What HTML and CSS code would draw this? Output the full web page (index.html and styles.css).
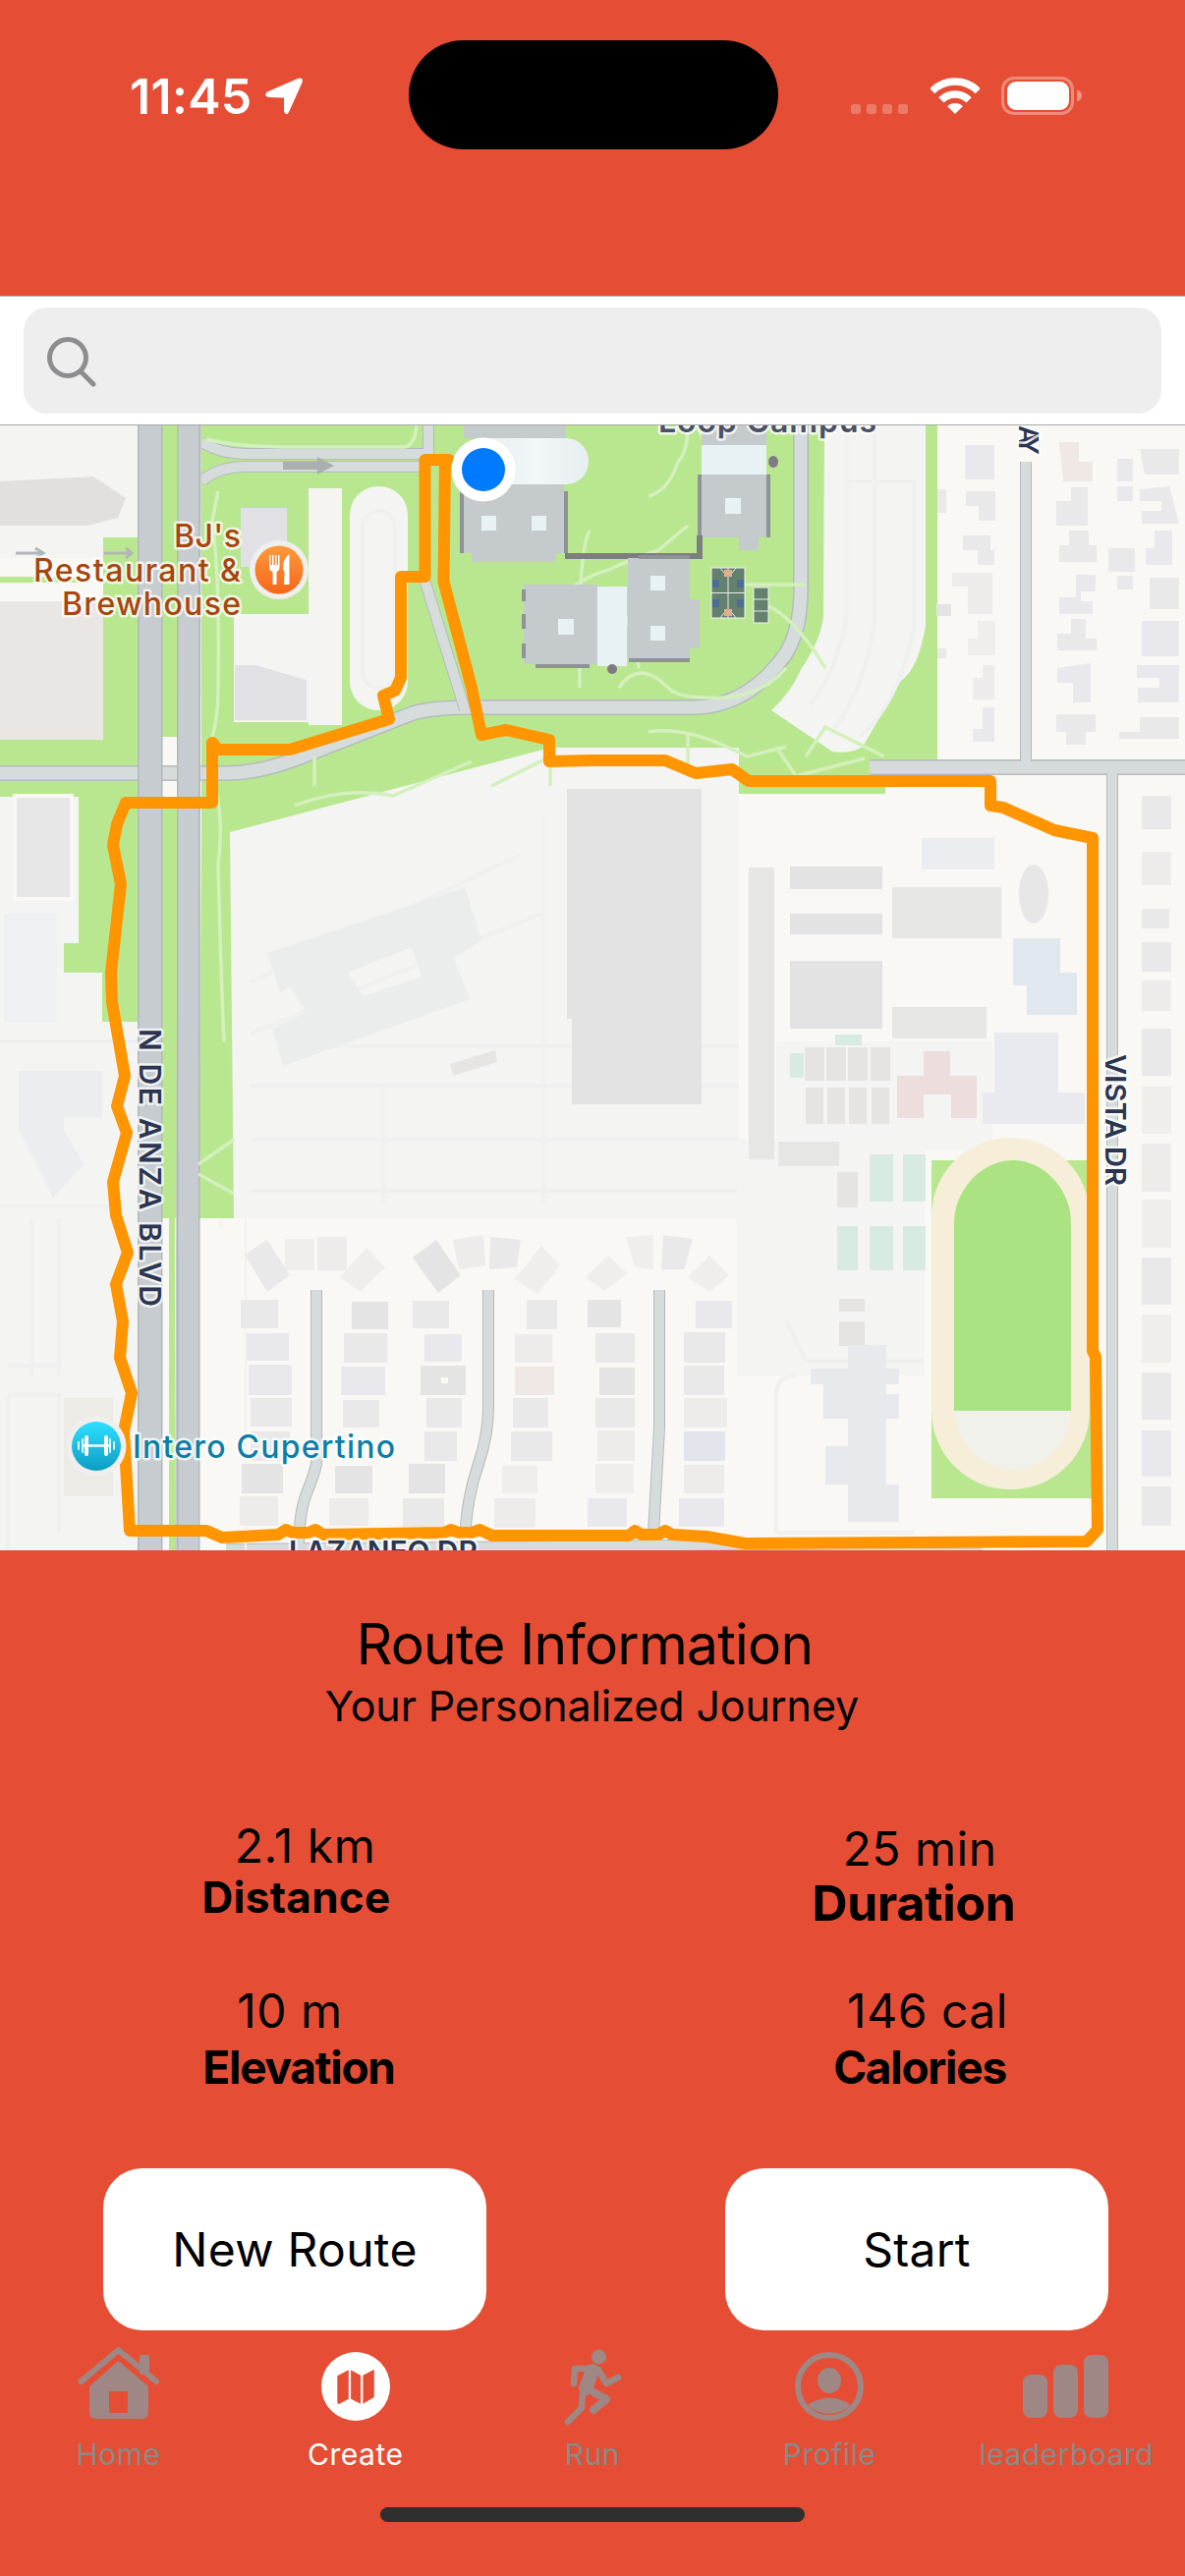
FILE: index.html
```html
<!DOCTYPE html>
<html lang="en">
<head>
<meta charset="utf-8">
<title>Route Information</title>
<link rel="stylesheet" href="styles.css">
</head>
<body>
<div class="app">
  <header class="statusbar">
    <div class="time">11:45</div>
    <svg class="loc" viewBox="0 0 40 38" width="40" height="38"><path class="white" d="M3 14.5Q-1 18 4 20L20 20.500V34Q22 40 25 35L38.500 5Q40 -1 34 1Z"/></svg>
    <div class="island"></div>
    <div class="signal"><span></span><span></span><span></span><span></span></div>
    <svg class="wifi" viewBox="0 0 50 37" width="50" height="37">
      <path class="wifi-arc" d="M1.700 13.700A33 33 0 0 1 48.300 13.700"/>
      <path class="wifi-arc" d="M10.900 22.900A20 20 0 0 1 39.100 22.900"/>
      <path class="white" d="M25 37L17.200 29.200A11 11 0 0 1 32.800 29.200Z"/>
    </svg>
    <div class="battery"><div class="battery-fill"></div></div>
    <div class="battery-cap"></div>
  </header>

  <section class="search">
    <div class="search-field">
      <svg class="search-icon" viewBox="0 0 52 52" width="52" height="52"><circle cx="22" cy="22" r="18.500"/><path d="M35 36L48 49"/></svg>
    </div>
  </section>

  <svg class="map" viewBox="0 433 1206 1145" width="1206" height="1145">
    <defs>
      <linearGradient id="gOrange" x1="0" y1="0" x2="0" y2="1"><stop offset="0" stop-color="#FF9A3C"/><stop offset="1" stop-color="#F5661A"/></linearGradient>
      <linearGradient id="gBlue" x1="0" y1="0" x2="0" y2="1"><stop offset="0" stop-color="#2EE0FF"/><stop offset="1" stop-color="#0E9CC2"/></linearGradient>
      <linearGradient id="gGlass" x1="0" y1="0" x2="1" y2="0"><stop offset="0" stop-color="#E4EDEF"/><stop offset=".6" stop-color="#F2F7F9"/><stop offset="1" stop-color="#E6EEF0"/></linearGradient>
    </defs>
    <rect class="base" x="0" y="433" width="1206" height="1145"/>
    <!-- lots -->
    <rect class="lot" x="0" y="433" width="140" height="135"/>
    <rect class="lot" x="0" y="795" width="140" height="783"/>
    <rect class="lot" x="0" y="1100" width="120" height="478"/>

    <!-- green -->
    <path class="green" d="M205 433H954V775H901V808H751L700 762H560L238 855V1240H202L205 855Z"/>
    <path class="green" d="M105 547H140V782H0V753H105Z"/>
    <path class="green" d="M0 587H80V593H0Z"/>
    <path class="green" d="M80 793H140V1040H104V990H65V960H80Z"/>
    <rect class="green" x="0" y="793" width="80" height="18"/>
    <rect class="green" x="165" y="433" width="17" height="807"/>
    <rect class="base" x="165" y="750" width="15" height="32"/>
    <rect class="base" x="165" y="794" width="15" height="26"/>
    <rect class="base" x="165" y="1240" width="14" height="338"/>
    <rect class="green" x="172" y="1240" width="6" height="338"/>

    <!-- large pale lots -->
    <path class="lot" d="M234 847L560 761H752V1240H238Z"/>
    <path class="lot" d="M839 433H942V637Q935 680 917 693L878 760Q865 768 847 765L785 723Q805 705 816 680Q836 650 838 627Z"/>
    <path class="lot-line" d="M862 433V620Q858 670 825 718M890 433V630Q885 690 846 748M862 490H930V640Q915 715 875 750"/>
    <rect class="white-lot" x="314" y="497" width="34" height="241"/>
    <rect class="lot" x="356" y="495" width="59" height="228" rx="29"/>
    <rect class="lot-line" x="369" y="520" width="33" height="180" rx="16"/>
    <rect class="lot" x="238" y="625" width="88" height="110"/>
    <path class="lot-line" d="M255 1000L530 870M255 1052L550 930M254 1105H752M254 1160H752M254 1212H752M390 1105V1225M553 830V1225M320 1065H752M0 1060H140M0 1228H120M32 1240V1400M60 1240V1400M8 1390H60M8 1420H60V1560M8 1420V1578"/>

    <!-- campus lots right -->
    <rect class="lot" x="750" y="1160" width="190" height="240"/>
    <rect class="lot" x="790" y="1060" width="220" height="110"/>
    <path class="lot-line" d="M810 1400Q790 1400 790 1420V1560H930M800 1345L820 1385H940"/>

    <!-- buildings left -->
    <path class="b-warm" d="M0 490L95 485L128 507L120 527L90 535H0Z"/>
    <rect class="b-warm2" x="0" y="612" width="105" height="141"/>
    <rect class="b-mauve" x="245" y="517" width="47" height="60"/>
    <path class="b-mauve" d="M239 677H260L312 692V733H239Z"/>
    <rect class="b-grey" x="15" y="810" width="58" height="105"/>
    <rect class="b-pale" x="4" y="930" width="54" height="111"/>
    <path class="b-blue" d="M19 1090H104V1138H65V1150L85 1185L54 1219L19 1150Z"/>
    <rect class="b-warm3" x="65" y="1423" width="50" height="100"/>

    <!-- central -->
    <path class="b-pale2" d="M272 970L473 903L490 957L462 975L478 1017L288 1085L277 1047L311 1031L296 1004L285 1010ZM354 990L369 1014L429 994L419 964Z" fill-rule="evenodd"/>
    <path class="b-dark" d="M582 803H714V1124H582V1037H577V803Z"/>
    <path class="b-warm4" d="M458 1083L504 1069L506 1081L461 1095Z"/>

    <!-- campus blocks -->
    <rect class="b-blue" x="938" y="853" width="74" height="32"/>
    <rect class="b-dark" x="804" y="882" width="94" height="23"/>
    <rect class="b-warm5" x="908" y="903" width="111" height="52"/>
    <rect class="b-dark" x="804" y="930" width="94" height="21"/>
    <rect class="b-dark" x="804" y="978" width="94" height="69"/>
    <rect class="b-warm5" x="908" y="1025" width="96" height="32"/>
    <rect class="b-warm5" x="762" y="883" width="26" height="297"/>
    <rect class="b-warm5" x="792" y="1162" width="62" height="25"/>
    <ellipse class="b-grey" cx="1052" cy="910" rx="17" ry="32"/>
    <rect class="b-sky" x="1031" y="955" width="48" height="46"/>
    <path class="b-sky" d="M1031 990H1096V1033H1045V1003H1031Z"/>
    <rect class="b-blue2" x="1012" y="1051" width="65" height="62"/>
    <rect class="b-blue2" x="1000" y="1112" width="104" height="32"/>
    <rect class="b-tan" x="819" y="1066" width="20" height="34"/><rect class="b-tan" x="841" y="1066" width="20" height="34"/><rect class="b-tan" x="863" y="1066" width="20" height="34"/><rect class="b-tan" x="886" y="1066" width="20" height="34"/>
    <rect class="b-tan" x="820" y="1107" width="18" height="37"/><rect class="b-tan" x="842" y="1107" width="18" height="37"/><rect class="b-tan" x="864" y="1107" width="18" height="37"/><rect class="b-tan" x="887" y="1107" width="18" height="37"/>
    <path class="b-pink" d="M940 1070H967V1095H994V1138H968V1114H940V1138H913V1095H940Z"/>
    <rect class="court" x="885" y="1175" width="24" height="48"/><rect class="court" x="919" y="1175" width="23" height="48"/>
    <rect class="court" x="852" y="1248" width="21" height="45"/><rect class="court" x="885" y="1248" width="24" height="45"/><rect class="court" x="919" y="1248" width="23" height="45"/>
    <rect class="court" x="850" y="1053" width="27" height="11"/><rect class="court" x="804" y="1072" width="14" height="25"/>
    <rect class="b-tan" x="852" y="1193" width="21" height="36"/>
    <rect class="b-tan" x="854" y="1322" width="26" height="13"/><rect class="b-tan" x="854" y="1345" width="26" height="25"/>
    <path class="b-blue3" d="M863 1369H902V1393H915V1409H902V1419H915V1444H902V1511H915V1549H863V1511H840V1472H863V1444H838V1409H825V1393H863Z"/>

    <!-- track -->
    <rect class="green" x="948" y="1181" width="167" height="344"/>
    <rect class="track" x="948" y="1158" width="161" height="358" rx="80"/>
    <path class="field" d="M971 1436V1245C971 1210 1000 1181 1031 1181C1062 1181 1090 1210 1090 1245V1436Z"/>
    <path class="field-pale" d="M971 1436H1090C1088 1470 1060 1496 1031 1496C1002 1496 973 1470 971 1436Z"/>

    <!-- campus loop roads -->
    <g class="roads">
      <path class="road-edge" d="M0 787H230Q262 787 300 773L420 726Q440 720 480 720H700Q760 722 800 665Q815 640 815 600V433"/>
      <path class="road" d="M0 787H230Q262 787 300 773L420 726Q440 720 480 720H700Q760 722 800 665Q815 640 815 600V433"/>
      <path class="road-edge thin" d="M205 450Q225 462 250 462H436M205 490Q222 475 250 475H436M436 433V475M432 590L473 722"/>
      <path class="road thin" d="M205 450Q225 462 250 462H436M205 490Q222 475 250 475H436M436 433V475M432 590L473 722"/>
      <path class="road-edge" d="M885 781H1206"/>
      <path class="road" d="M885 781H1206"/>
      <path class="road-edge thin" d="M1044 470V775M1132 787V1578"/>
      <path class="road thin" d="M1044 470V775M1132 787V1578"/>
      <path class="road-edge thin" d="M322 1313V1490Q320 1500 312 1520Q304 1540 304 1578M497 1313V1433Q497 1460 487 1490Q473 1530 473 1578M671 1313V1454L664 1578M230 1577L790 1572L1000 1575"/>
      <path class="road thin" d="M322 1313V1490Q320 1500 312 1520Q304 1540 304 1578M497 1313V1433Q497 1460 487 1490Q473 1530 473 1578M671 1313V1454L664 1578M230 1577L790 1572L1000 1575"/>
    </g>
    <path class="arrow-grey" d="M288 470H323V465L340 474L323 483V478H288Z"/>
    <path class="arrow-thin" d="M16 563H42M36 558L44 563L36 568M106 563H134M128 558L134 563L128 568"/>

    <!-- De Anza -->
    <path class="main-road" d="M140 433H165V1578H141Z"/>
    <path class="main-road" d="M182 433H205L202 1578H178Z"/>
    <rect class="edge-line" x="140" y="433" width="1.500" height="1145"/><rect class="edge-line" x="164" y="433" width="1.500" height="1145"/>
    <rect class="edge-line" x="180" y="433" width="1.500" height="1145"/><rect class="edge-line" x="202" y="433" width="1.500" height="1145"/>

    <!-- footpaths -->
    <path class="path" d="M210 447Q240 455 300 455H410Q422 455 424 433M222 500L216 530Q224 590 222 700Q222 740 212 760M218 800Q228 830 222 880Q225 1000 228 1060M238 1160L202 1185M238 1215L202 1195M600 540Q590 560 590 640V700M560 625Q580 590 620 580Q640 570 670 560L700 535M600 600Q640 600 650 680M630 700Q650 670 680 700Q690 712 740 710Q780 705 800 680M660 505Q680 500 690 470Q700 460 700 433M710 433Q720 470 760 470M755 595H820M770 615Q800 615 840 680M660 745Q700 738 760 770L800 760M700 745V790M790 760L810 790L880 772M820 770L840 740L900 770M320 770V800M500 800L560 770V800M300 820Q350 800 400 810L480 775"/>
    <path class="path-thin" d="M250 1240V1578M225 1240V1250"/>

    <!-- campus buildings -->
    <rect class="glass" x="470" y="446" width="129" height="47" rx="23"/>
    <rect class="bld" x="472" y="433" width="104" height="13"/>
    <path class="bld" d="M472 493H574V563H566V572H480V563H472Z"/>
    <path class="bld-edge" d="M470 500V563M576 500V563"/>
    <rect class="sky" x="490" y="525" width="15" height="15"/><rect class="sky" x="541" y="525" width="15" height="15"/>

    <rect class="bld" x="714" y="433" width="66" height="20"/>
    <rect class="sky" x="714" y="453" width="66" height="30"/>
    <path class="bld" d="M714 483H780V547H772V560H752V547H714Z"/>
    <path class="bld-edge" d="M712 483V547M782 483V547"/>
    <rect class="sky" x="738" y="507" width="16" height="16"/>
    <ellipse class="dot" cx="787" cy="470" rx="5" ry="6"/>
    <path class="wall" d="M575 566H712V545"/>

    <rect class="bld" x="533" y="595" width="75" height="81"/>
    <rect class="sky" x="608" y="597" width="30" height="81"/>
    <path class="bld" d="M639 568H702V610H712V660H702V670H639Z"/>
    <rect class="sky" x="568" y="630" width="16" height="16"/>
    <rect class="sky" x="662" y="586" width="15" height="15"/><rect class="sky" x="662" y="637" width="15" height="15"/>
    <path class="bld-edge" d="M533 600V612M533 625V640M533 655V670M640 672H702M545 678H600M650 567H702"/>
    <ellipse class="dot" cx="623" cy="681" rx="5" ry="5"/>

    <rect class="court-dark" x="724" y="578" width="34" height="51"/>
    <path class="court-lines" d="M724 603.500H758M741 578V629M733 578Q741 592 749 578M733 629Q741 615 749 629"/>
    <rect class="court-tan" x="737" y="580" width="8" height="7"/><rect class="court-tan" x="737" y="620" width="8" height="7"/>
    <rect class="court-b" x="725" y="590" width="7" height="8"/><rect class="court-b" x="750" y="590" width="7" height="8"/><rect class="court-b" x="725" y="610" width="7" height="8"/><rect class="court-b" x="750" y="610" width="7" height="8"/>
    <rect class="court-dark" x="767" y="598" width="15" height="36"/>
    <path class="court-lines" d="M767 610H782M767 622H782"/>

    <!-- residential right -->
    <g class="houses">
      <path class="hb" d="M982 453H1012V488H982Z"/><path class="hg" d="M983 500H1013V530H996V515H983Z"/><path class="hg" d="M980 545H1008V560H1012V575H995V560H980Z"/><path class="hp" d="M969 583H1010V625H985V597H969Z"/><path class="hw" d="M995 632H1013V667H985V650H995Z"/><path class="hp" d="M1000 677H1012V712H990V690H1000Z"/><path class="hb" d="M1000 720H1012V755H990V742H1000Z"/>
      <path class="hr" d="M1078 450H1098V470H1112V490H1082Z"/><path class="hg" d="M1090 496H1107V535H1075V510H1090Z"/><path class="hg" d="M1088 540H1108V555H1116V572H1078V555H1088Z"/><path class="hb" d="M1095 585H1115V602H1100V612H1112V625H1078V608H1095Z"/><path class="hg" d="M1090 630H1105V650H1116V662H1076V645H1090Z"/><path class="hb" d="M1076 680L1110 675V715H1092V695H1076Z"/><path class="hg" d="M1075 727H1115V745H1105V758H1085V745H1075Z"/>
      <path class="hg" d="M1160 457H1200V483H1165Z"/><path class="hg" d="M1160 498L1190 495L1200 533H1162V520H1182V510H1160Z"/><path class="hb" d="M1175 540H1193V575H1166V558H1175Z"/><rect class="hg" x="1170" y="588" width="30" height="32"/><rect class="hb" x="1162" y="632" width="38" height="36"/><path class="hb" d="M1157 677H1200V715H1158V700H1180V690H1157Z"/><path class="hg" d="M1139 745H1160V730H1200V752H1139Z"/>
      <rect class="hb" x="1137" y="467" width="16" height="23"/><rect class="hb" x="1137" y="495" width="16" height="15"/><rect class="hg" x="1128" y="558" width="27" height="24"/><rect class="hg" x="1137" y="586" width="16" height="14"/>
      <rect class="hg" x="954" y="498" width="9" height="24"/><rect class="hd" x="953" y="615" width="15" height="12"/><rect class="hg" x="954" y="660" width="9" height="10"/>
      <rect class="hg" x="1162" y="810" width="30" height="34"/><rect class="hp" x="1162" y="867" width="30" height="34"/><rect class="hg" x="1162" y="925" width="28" height="20"/><rect class="hg" x="1162" y="959" width="30" height="30"/>
      <rect class="hp" x="1162" y="998" width="30" height="31"/><rect class="hg" x="1162" y="1047" width="30" height="48"/><rect class="hw" x="1162" y="1106" width="30" height="48"/><rect class="hp" x="1162" y="1164" width="30" height="49"/><rect class="hw" x="1162" y="1221" width="30" height="49"/><rect class="hg" x="1162" y="1280" width="30" height="48"/><rect class="hw" x="1162" y="1338" width="30" height="49"/><rect class="hg" x="1162" y="1397" width="30" height="48"/><rect class="hb" x="1162" y="1456" width="30" height="47"/><rect class="hg" x="1162" y="1513" width="30" height="40"/>
      <!-- cul-de-sac fans -->
      <path class="hg" d="M249 1277L272 1262L295 1298L272 1315Z"/><rect class="hw" x="290" y="1261" width="30" height="32"/><rect class="hp" x="323" y="1259" width="30" height="34"/><path class="hw" d="M346 1300L373 1270L392 1290L367 1315Z"/>
      <path class="hd" d="M420 1280L444 1262L469 1298L446 1316Z"/><path class="hp" d="M461 1262L492 1257L494 1288L467 1292Z"/><path class="hg" d="M499 1259L530 1262L526 1290L498 1292Z"/><path class="hw" d="M524 1302L551 1268L570 1288L547 1317Z"/>
      <path class="hw" d="M596 1300L619 1278L638 1296L615 1314Z"/><path class="hw" d="M637 1259L665 1257V1292L646 1290Z"/><path class="hg" d="M675 1257L705 1261L696 1292H673Z"/><path class="hw" d="M700 1300L722 1278L742 1298L722 1315Z"/>
      <!-- street 1 -->
      <rect class="hg" x="245" y="1323" width="38" height="29"/><rect class="hb" x="251" y="1357" width="43" height="28"/><rect class="hb" x="253" y="1389" width="44" height="31"/><rect class="hg" x="255" y="1423" width="42" height="29"/><rect class="hg" x="255" y="1457" width="40" height="30"/><rect class="hd" x="246" y="1490" width="42" height="30"/><rect class="hp" x="244" y="1523" width="39" height="30"/>
      <rect class="hd" x="358" y="1325" width="37" height="28"/><rect class="hg" x="350" y="1357" width="44" height="30"/><rect class="hb" x="347" y="1391" width="45" height="29"/><rect class="hg" x="349" y="1425" width="37" height="28"/><rect class="hd" x="341" y="1492" width="38" height="28"/><rect class="hp" x="335" y="1525" width="40" height="28"/>
      <!-- street 2 -->
      <rect class="hg" x="420" y="1324" width="37" height="28"/><rect class="hb" x="432" y="1358" width="38" height="28"/><rect class="hd" x="428" y="1390" width="46" height="30"/><rect class="base" x="449" y="1402" width="7" height="6"/><rect class="hg" x="434" y="1423" width="36" height="30"/><rect class="hg" x="432" y="1457" width="33" height="30"/><rect class="hd" x="416" y="1490" width="37" height="30"/><rect class="hg" x="410" y="1525" width="42" height="29"/>
      <rect class="hg" x="536" y="1323" width="31" height="30"/><rect class="hp" x="524" y="1358" width="38" height="29"/><rect class="hr" x="524" y="1391" width="40" height="29"/><rect class="hg" x="522" y="1423" width="36" height="30"/><rect class="hg" x="520" y="1457" width="42" height="30"/><rect class="hw" x="511" y="1492" width="36" height="28"/><rect class="hp" x="503" y="1525" width="42" height="30"/>
      <!-- street 3 -->
      <rect class="hd" x="598" y="1323" width="34" height="28"/><rect class="hg" x="606" y="1357" width="40" height="30"/><rect class="hd" x="610" y="1392" width="36" height="28"/><rect class="hg" x="606" y="1423" width="40" height="30"/><rect class="hp" x="608" y="1456" width="38" height="31"/><rect class="hw" x="606" y="1490" width="39" height="30"/><rect class="hb" x="598" y="1525" width="40" height="29"/>
      <rect class="hb" x="708" y="1324" width="37" height="28"/><rect class="hg" x="696" y="1356" width="42" height="31"/><rect class="hg" x="696" y="1390" width="41" height="30"/><rect class="hp" x="696" y="1423" width="44" height="30"/><rect class="hsky" x="696" y="1457" width="42" height="30"/><rect class="hp" x="696" y="1491" width="41" height="29"/><rect class="hb" x="691" y="1525" width="46" height="29"/>
    </g>

    <!-- route -->
    <path class="route" d="M457 468H432.500V587H408V690L402 703L390 708L396 732L295 763H222L216 756V817H128L119 839L115 860L123 900L113 990L114 1020L127 1095L119 1126L129 1153L115 1203L118 1237L130 1275L118 1307L125 1345L122 1382L134 1418L126 1457L132 1558H210L226 1565L283 1562L291 1557L298 1560H314L321 1557L329 1562L452 1560L459 1557L467 1560H480L488 1557L501 1563H640L646 1558L653 1562L670 1562L677 1558L684 1562L719 1564L758 1571L1106 1569L1117 1557L1115 1381L1112 1375V853L1073 845L1021 822L1008 820V795H762L745 783L708 787L677 774H600L559 775V753L515 743L490 748L480 700L451.500 592L453 468"/>

    <!-- user dot -->
    <circle class="white" cx="492" cy="478" r="32.500"/>
    <circle class="blue" cx="492" cy="478" r="22"/>

    <!-- labels -->
    <text class="lbl lbl-top" x="670" y="440" textLength="222">Loop Campus</text>
    <text class="lbl lbl-ay" transform="translate(1037 463) rotate(90)" x="-30" y="0" textLength="30">AY</text>
    <text class="lbl lbl-street" transform="translate(142 1047) rotate(90)" x="0" y="0" textLength="283">N DE ANZA BLVD</text>
    <text class="lbl lbl-street2" transform="translate(1125 1073) rotate(90)" x="0" y="0" textLength="134">VISTA DR</text>
    <text class="lbl lbl-street" x="294" y="1590" textLength="192">LAZANEO DR</text>

    <text class="lbl lbl-poi lbl-orange" x="177" y="557" textLength="68">BJ's</text>
    <text class="lbl lbl-poi lbl-orange" x="34" y="592" textLength="211">Restaurant &amp;</text>
    <text class="lbl lbl-poi lbl-orange" x="63" y="626" textLength="182">Brewhouse</text>
    <circle class="pin-halo" cx="284" cy="580" r="30"/>
    <circle cx="284" cy="580" r="24.500" fill="url(#gOrange)"/>
    <path class="white" d="M274 565H275.500V575H277V565H278.500V575H280V565H281.500V575H283V565H284.500V577Q284.500 581 281.500 582V595H277.500V582Q274 581 274 577Z"/>
    <path class="white" d="M289 595H294.500V564Q288 568 288 579L289.500 582Z"/>

    <circle class="pin-halo" cx="98" cy="1472" r="30.500"/>
    <circle cx="98" cy="1472" r="25" fill="url(#gBlue)"/>
    <path class="dumb" d="M85 1471.500H111"/>
    <path class="dumb-thick" d="M88 1463V1480M108 1463V1480"/>
    <path class="dumb-thin" d="M80 1468V1475M116 1468V1475M84 1465V1478M112 1465V1478"/>
    <text class="lbl lbl-poi lbl-blue" x="135" y="1484" textLength="267">Intero Cupertino</text>
  </svg>

  <main class="info">
    <h1 class="title">Route Information</h1>
    <p class="subtitle">Your Personalized Journey</p>
    <div class="stats">
      <div class="stat stat-left">
        <div class="value v-distance">2.1 km</div>
        <div class="label l-distance">Distance</div>
      </div>
      <div class="stat stat-right">
        <div class="value v-duration">25 min</div>
        <div class="label l-duration">Duration</div>
      </div>
      <div class="stat stat-left">
        <div class="value v-elevation">10 m</div>
        <div class="label l-elevation">Elevation</div>
      </div>
      <div class="stat stat-right">
        <div class="value v-calories">146 cal</div>
        <div class="label l-calories">Calories</div>
      </div>
    </div>
    <div class="actions">
      <button class="btn">New Route</button>
      <button class="btn">Start</button>
    </div>
  </main>

  <nav class="tabs">
    <div class="tab">
      <svg class="tab-icon" viewBox="0 0 84 80" width="84" height="80">
        <path class="icon-stroke" d="M3.500 35L41.500 3L80 35"/>
        <rect class="icon-fill" x="63" y="8" width="10" height="20" rx="2"/>
        <path class="icon-fill" fill-rule="evenodd" d="M41.500 14L72 40V67A6 6 0 0 1 66 73H18A6 6 0 0 1 12 67V40ZM32 45V67H51V45Z"/>
      </svg>
      <span class="tab-label">Home</span>
    </div>
    <div class="tab tab-active">
      <svg class="tab-icon" viewBox="0 0 70 80" width="70" height="80">
        <circle class="white" cx="35" cy="40" r="35"/>
        <path class="map-panel" d="M16.300 29.300L27.800 23.300V52.700L18 58Q16.300 58 16.300 56ZM30.100 23.300L40 28.700V57.700L30.100 52.700ZM42.400 28.700L53.800 22.700V51L42.400 57.700Z"/>
      </svg>
      <span class="tab-label">Create</span>
    </div>
    <div class="tab">
      <svg class="tab-icon" viewBox="0 0 62 80" width="62" height="80">
        <ellipse class="icon-fill" cx="37.500" cy="10" rx="7.500" ry="7.500"/>
        <path class="icon-limb" d="M29 22H13L12 37"/>
        <path class="icon-torso" d="M31 24L24 42"/>
        <path class="icon-limb" d="M37 23L45 37L57 31"/>
        <path class="icon-leg" d="M25 42L45 53L32 64"/>
        <path class="icon-limb" d="M21 47L20 62L6 76"/>
      </svg>
      <span class="tab-label">Run</span>
    </div>
    <div class="tab">
      <svg class="tab-icon" viewBox="0 0 70 80" width="70" height="80">
        <circle class="icon-ring" cx="35" cy="40" r="32"/>
        <ellipse class="icon-fill" cx="35" cy="34" rx="12" ry="13"/>
        <path class="icon-fill" d="M13 59Q35 44 57 59A32 32 0 0 1 13 59Z"/>
      </svg>
      <span class="tab-label">Profile</span>
    </div>
    <div class="tab">
      <svg class="tab-icon" viewBox="0 0 88 80" width="88" height="80">
        <rect class="icon-fill" x="0" y="28" width="25" height="44" rx="8"/>
        <rect class="icon-fill" x="31" y="18" width="25" height="54" rx="8"/>
        <rect class="icon-fill" x="62" y="8" width="25" height="64" rx="8"/>
      </svg>
      <span class="tab-label">leaderboard</span>
    </div>
  </nav>
  <div class="home-indicator"></div>
</div>
</body>
</html>
```
FILE: styles.css
```css
* { box-sizing: border-box; }
html, body { margin: 0; padding: 0; }
body { width: 1206px; height: 2622px; overflow: hidden; font-family: "Inter", "Liberation Sans", sans-serif; }
.app { width: 1206px; height: 2622px; background: #E54E35; display: flex; flex-direction: column; }

/* status bar */
.statusbar { height: 301px; display: flex; align-items: flex-start; padding-left: 132px; flex: none; }
.time { color: #fff; font-size: 50px; font-weight: 600; line-height: 50px; margin-top: 73px; width: 137px; letter-spacing: 0.3px; }
.loc { margin-top: 79px; flex: none; }
.island { width: 376px; height: 111px; background: #000; border-radius: 56px; margin: 41px 74px 0 107px; flex: none; }
.signal { display: flex; gap: 6px; margin-top: 106px; width: 81px; flex: none; }
.signal span { width: 10px; height: 10px; border-radius: 3px; background: rgba(255,255,255,.25); }
.wifi { margin-top: 79px; flex: none; }
.wifi-arc { fill: none; stroke: #fff; stroke-width: 7.5; }
.battery { width: 74px; height: 39px; margin: 78px 0 0 22px; border: 3px solid rgba(255,255,255,.35); border-radius: 13px; padding: 2px 2.5px; flex: none; }
.battery-fill { width: 100%; height: 100%; background: #fff; border-radius: 9px; }
.battery-cap { width: 5px; height: 11px; margin: 92px 0 0 3px; background: rgba(255,255,255,.4); border-radius: 0 5px 5px 0; flex: none; }
.white { fill: #fff; }
.blue { fill: #007AFF; }

/* search */
.search { height: 132px; flex: none; background: #fff; border-top: 1px solid #B5B5B5; border-bottom: 1px solid #A9A9A9; padding: 11px 24px; }
.search-field { height: 108px; background: #EEEEEE; border-radius: 24px; padding: 29px 0 0 23px; }
.search-icon { display: block; fill: none; stroke: #8D8D90; stroke-width: 5; stroke-linecap: round; }

/* map */
.map { display: block; flex: none; }
.base { fill: #F9F8F4; }
.lot { fill: #F4F4F3; }
.white-lot { fill: #F5F4F1; }
.lot-line { fill: none; stroke: #EFF0EF; stroke-width: 4; }
.green { fill: #B9E78F; }
.road { fill: none; stroke: #D6DCDB; stroke-width: 13; }
.road.thin { stroke-width: 10; }
.road-edge { fill: none; stroke: #B5BBBD; stroke-width: 16; }
.road-edge.thin { stroke-width: 12; }
.main-road { fill: #C6CCCF; }
.edge-line { fill: #B2B8BA; }
.arrow-grey { fill: #ABAFB0; }
.arrow-thin { fill: none; stroke: #B3B6B5; stroke-width: 3; }
.path { fill: none; stroke: #D3F0BD; stroke-width: 3.5; }
.path-thin { fill: none; stroke: #F2F2EF; stroke-width: 2; }
.bld { fill: #C5CBCD; }
.bld-edge { fill: none; stroke: #8F9395; stroke-width: 4; }
.sky { fill: #E8F2F4; }
.glass { fill: url(#gGlass); }
.wall { fill: none; stroke: #7C7E7F; stroke-width: 6; }
.dot { fill: #7D7A83; }
.court-dark { fill: #64806F; stroke: #F1F4EF; stroke-width: 1; }
.court-lines { fill: none; stroke: #E8EEE6; stroke-width: 1; }
.court-tan { fill: #E0AE8B; }
.court-b { fill: #4B6E93; }
.b-warm { fill: #E2E0DF; }
.b-warm2 { fill: #E9E6E3; }
.b-warm3 { fill: #EDEBE6; }
.b-warm4 { fill: #E6E5E2; }
.b-warm5 { fill: #E6E6E3; }
.b-mauve { fill: #E1E0E4; }
.b-grey { fill: #E7E7E7; stroke: #F9F8F4; stroke-width: 4; }
.b-pale { fill: #EFF0F2; }
.b-pale2 { fill: #EBECEC; }
.b-dark { fill: #E3E3E3; }
.b-blue { fill: #ECEDF1; }
.b-blue2 { fill: #E9EAF0; }
.b-blue3 { fill: #E7E9ED; }
.b-sky { fill: #E1E7EE; }
.b-tan { fill: #E5E4E1; }
.b-pink { fill: #EDDDDD; }
.court { fill: #D8EBE1; }
.track { fill: #F6EED9; }
.field { fill: #ABE383; }
.field-pale { fill: #F0F1EA; }
.hg { fill: #E9E9E9; }
.hb { fill: #E9E9ED; }
.hw { fill: #F0EEEA; }
.hd { fill: #E5E4E4; }
.hp { fill: #EEECEB; }
.hr { fill: #EFE8E5; }
.hsky { fill: #E2E5EC; }
.route { fill: none; stroke: #FF9500; stroke-width: 12; stroke-linejoin: round; stroke-linecap: round; }
.pin-halo { fill: #EFEFED; }
.dumb { fill: none; stroke: #fff; stroke-width: 2.5; }
.dumb-thick { fill: none; stroke: #fff; stroke-width: 4; stroke-linecap: round; }
.dumb-thin { fill: none; stroke: rgba(255,255,255,.85); stroke-width: 2; stroke-linecap: round; }
.lbl { font-family: "Inter", "Liberation Sans", sans-serif; paint-order: stroke; stroke: rgba(255,255,255,.75); stroke-width: 5px; stroke-linejoin: round; }
.lbl-top { font-size: 32px; font-weight: 600; fill: #4B5066; }
.lbl-ay { font-size: 27px; font-weight: 600; fill: #2B3550; }
.lbl-street { font-size: 30px; font-weight: 600; fill: #2B3550; }
.lbl-street2 { font-size: 29px; font-weight: 600; fill: #2B3550; }
.lbl-poi { font-size: 32px; font-weight: 500; }
.lbl-orange { fill: #A8460F; }
.lbl-blue { fill: #0B7FA6; }

/* info */
.info { height: 862px; flex: none; display: flex; flex-direction: column; color: #000; }
.title { margin: 61px 16px 0 0; font-size: 57px; line-height: 70px; font-weight: 400; text-align: center; letter-spacing: -0.8px; }
.subtitle { margin: 1px 0 0; padding-right: 1px; font-size: 43px; line-height: 52px; font-weight: 400; text-align: center; letter-spacing: -0.1px; }
.stats { display: grid; grid-template-columns: 603px 603px; margin-top: 91px; }
.stat { display: flex; flex-direction: column; text-align: center; height: 170px; }
.stat-right { padding-left: 63px; }
.value { font-size: 48px; line-height: 50px; letter-spacing: 0.5px; }
.label { font-size: 44px; line-height: 50px; font-weight: 700; letter-spacing: 0.3px; }
.v-distance { padding-left: 18px; margin-top: 1px; }
.l-distance { margin-top: 2px; }
.v-duration { margin-top: 4px; }
.v-elevation { padding-right: 13px; margin-top: -1px; }
.v-calories { padding-left: 16px; margin-top: -1px; }
.l-duration { padding-right: 12px; font-size: 50px; line-height: 54px; letter-spacing: -0.3px; margin-top: 3px; }
.l-elevation { padding-left: 5px; margin-top: 5px; font-size: 46px; line-height: 54px; letter-spacing: -1.3px; }
.l-calories { margin-top: 5px; font-size: 46px; line-height: 54px; letter-spacing: -1.3px; }
.actions { display: flex; gap: 243px; padding-left: 105px; margin-top: 14px; }
.btn { width: 390px; height: 165px; background: #fff; color: #000; border: 0; border-radius: 40px; font: 400 48px/1 "Inter", "Liberation Sans", sans-serif; letter-spacing: 0.3px; padding: 0; }

/* tabs */
.tabs { display: grid; grid-template-columns: repeat(5, 241.2px); height: 163px; flex: none; margin-top: -51px; }
.tab { display: flex; flex-direction: column; align-items: center; }
.tab-icon { display: block; }
.tab-label { color: #8A8A88; font-size: 30px; line-height: 36px; margin-top: 11px; letter-spacing: 0.5px; }
.tab-active .tab-label { color: #fff; }
.icon-fill { fill: #9E8784; }
.icon-stroke { fill: none; stroke: #9E8784; stroke-width: 6; stroke-linecap: round; stroke-linejoin: round; }
.icon-ring { fill: none; stroke: #9E8784; stroke-width: 6; }
.icon-limb { fill: none; stroke: #9E8784; stroke-width: 6.500; stroke-linecap: round; stroke-linejoin: round; }
.icon-leg { fill: none; stroke: #9E8784; stroke-width: 8; stroke-linecap: round; stroke-linejoin: round; }
.icon-torso { fill: none; stroke: #9E8784; stroke-width: 14; stroke-linecap: round; }
.map-panel { fill: #E54E35; }
.home-indicator { width: 432px; height: 15px; border-radius: 8px; background: #2F2F2F; margin: 0 0 0 387px; flex: none; }
```
